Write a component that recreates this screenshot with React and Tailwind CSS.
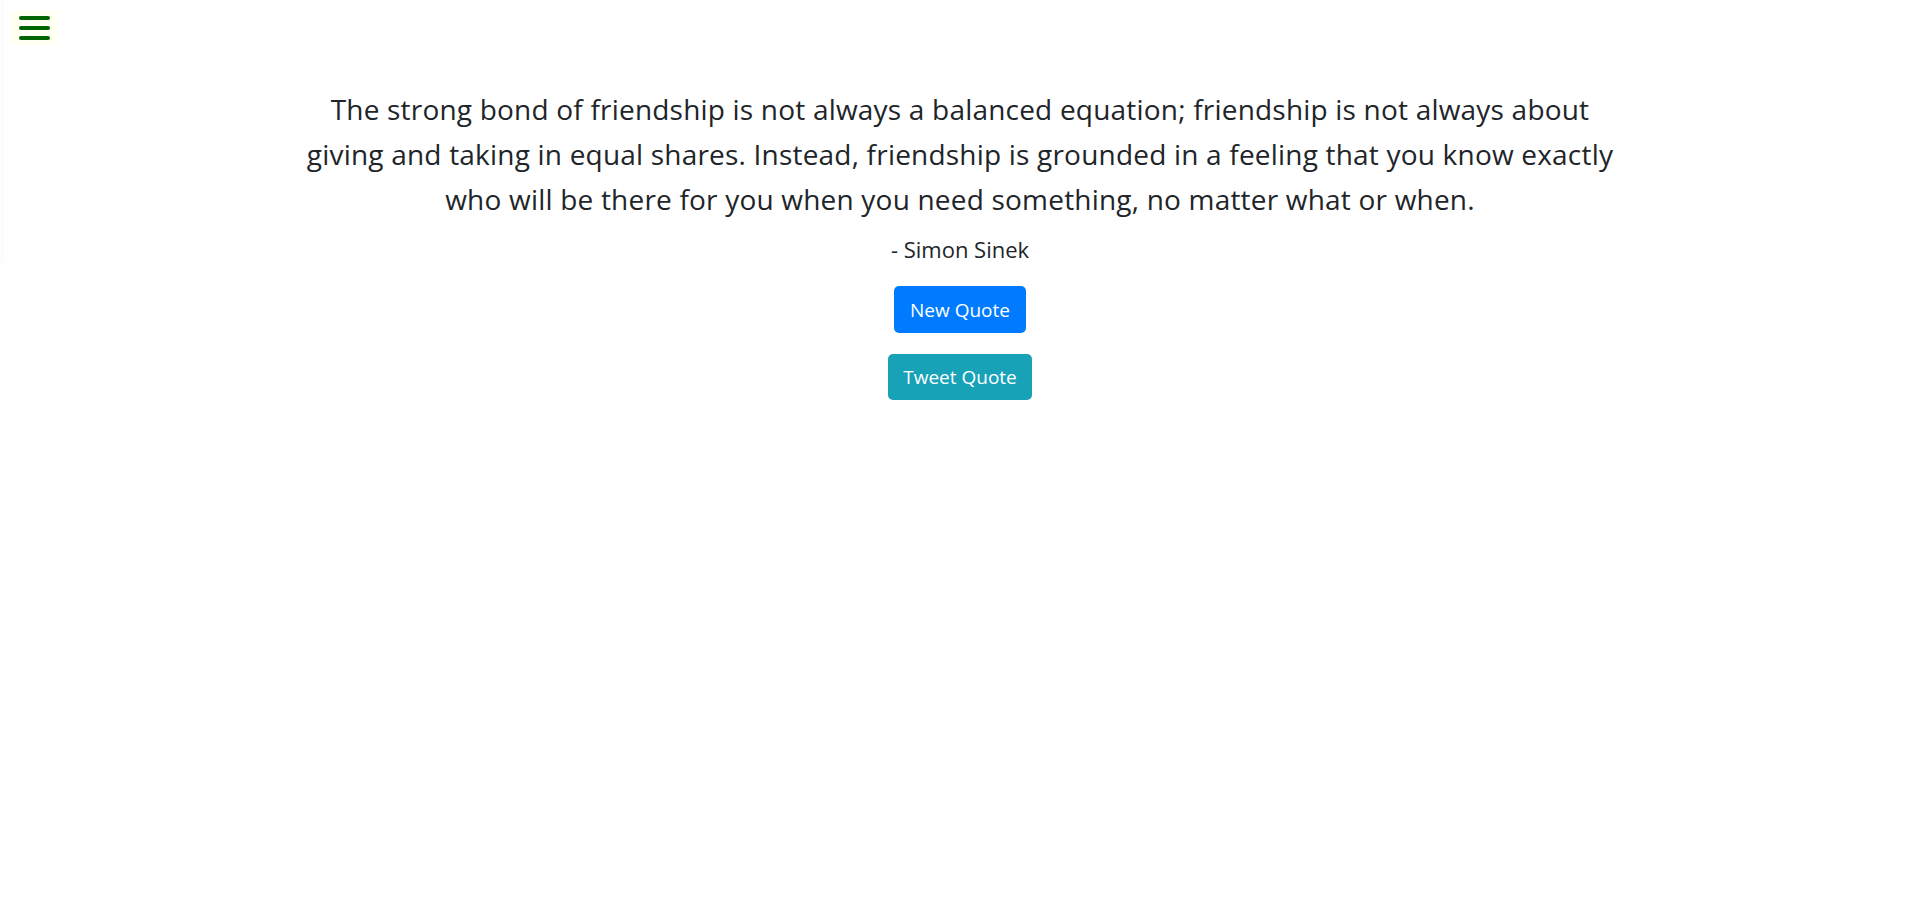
import React, { useState } from 'react';

const quotes = [
  {
    lines: [
      'The strong bond of friendship is not always a balanced equation; friendship is not always about',
      'giving and taking in equal shares. Instead, friendship is grounded in a feeling that you know exactly',
      'who will be there for you when you need something, no matter what or when.',
    ],
    author: 'Simon Sinek',
  },
];

const App = () => {
  const [index, setIndex] = useState(0);
  const quote = quotes[index];

  return (
    <div className="min-h-screen bg-white text-[#212529] font-['Open_Sans',sans-serif]">
      {/* Sidebar edge (closed) */}
      <div className="fixed left-0 top-0 h-[263px] w-px shadow-[0_0_4px_rgba(0,0,0,0.12)]" />

      <div className="pt-[10px] pl-[10px]">
        <button className="flex h-[35px] w-[48px] flex-col items-center justify-center gap-[6px] bg-[#fffff2]">
          <span className="block h-[4px] w-[31px] rounded-full bg-[#006400]" />
          <span className="block h-[4px] w-[31px] rounded-full bg-[#006400]" />
          <span className="block h-[4px] w-[31px] rounded-full bg-[#006400]" />
        </button>
      </div>

      <main className="mx-auto mt-[42px] flex max-w-[1360px] flex-col items-center text-center">
        <p className="text-[28px] leading-[45px] tracking-[0.2px]">
          {quote.lines.map((line, i) => (
            <span key={i} className="block whitespace-nowrap">
              {line}
            </span>
          ))}
        </p>
        <p className="mt-[11px] text-[22px] leading-[33px]">- {quote.author}</p>
        <button
          onClick={() => setIndex((index + 1) % quotes.length)}
          className="mt-[20px] h-[47px] rounded-[5px] bg-[#007bff] px-4 pt-px text-[19px] text-white"
        >
          New Quote
        </button>
        <button className="mt-[21px] h-[46px] rounded-[5px] bg-[#17a2b8] px-[15px] pt-px text-[19px] text-white">
          Tweet Quote
        </button>
      </main>
    </div>
  );
};

export default App;
